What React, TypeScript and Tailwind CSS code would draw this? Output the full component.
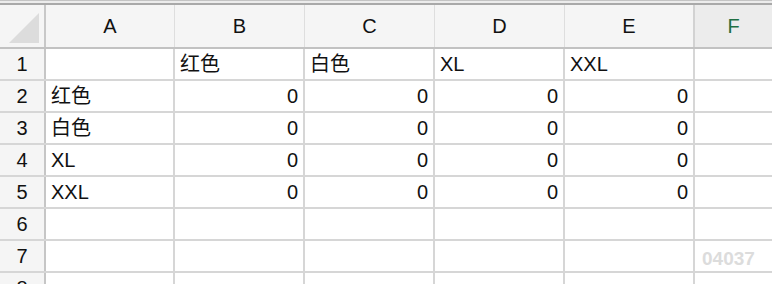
const cols = ['A', 'B', 'C', 'D', 'E', 'F']
const colW = ['w-[129px]', 'w-[130px]', 'w-[130px]', 'w-[130px]', 'w-[130px]', 'w-[77px]']

type Cell = { text: string; num?: boolean }

const rows: Cell[][] = [
  [{ text: '' }, { text: '红色' }, { text: '白色' }, { text: 'XL' }, { text: 'XXL' }, { text: '' }],
  [{ text: '红色' }, { text: '0', num: true }, { text: '0', num: true }, { text: '0', num: true }, { text: '0', num: true }, { text: '' }],
  [{ text: '白色' }, { text: '0', num: true }, { text: '0', num: true }, { text: '0', num: true }, { text: '0', num: true }, { text: '' }],
  [{ text: 'XL' }, { text: '0', num: true }, { text: '0', num: true }, { text: '0', num: true }, { text: '0', num: true }, { text: '' }],
  [{ text: 'XXL' }, { text: '0', num: true }, { text: '0', num: true }, { text: '0', num: true }, { text: '0', num: true }, { text: '' }],
  Array(6).fill({ text: '' }),
  Array(6).fill({ text: '' }),
  Array(6).fill({ text: '' }),
]

const font = { fontFamily: '"Liberation Sans", "Noto Sans CJK SC", sans-serif' }

export default function App() {
  return (
    <div className="relative w-[772px] h-[284px] overflow-hidden bg-white text-[20px] text-[#111]" style={font}>
      {/* top strip */}
      <div className="h-[1px] bg-[#c4c4c4]" />
      <div className="h-[2px] bg-[#ececec]" />
      <div className="h-[2px] bg-[#a9a9a9]" />

      {/* column headers */}
      <div className="flex h-[44px] border-b-2 border-[#c2c2c2] bg-[#f5f5f5]">
        <div className="w-[46px] shrink-0 border-r-2 border-[#c8c8c8] flex items-end justify-end pr-[5px] pb-[4px]">
          <svg width="30" height="30" viewBox="0 0 30 30">
            <polygon points="0,30 30,0 30,30" fill="#dcdcdc" />
          </svg>
        </div>
        {cols.map((c, i) => (
          <div
            key={c}
            className={`${colW[i]} shrink-0 flex items-center justify-center ${
              i === 5 ? 'bg-[#ececec] text-[#1f6f43]' : ''
            } ${i === 4 ? 'border-r-2 border-[#d2d2d2]' : i < 5 ? 'border-r border-[#dedede]' : ''}`}
          >
            {c}
          </div>
        ))}
      </div>

      {/* rows */}
      {rows.map((row, r) => (
        <div key={r} className="flex h-[32px] border-b-2 border-[#d6d6d6]">
          <div className="w-[46px] shrink-0 border-r-2 border-[#c6c6c6] bg-[#f5f5f5] flex items-center justify-center">
            {r + 1}
          </div>
          {row.map((cell, i) => (
            <div
              key={i}
              className={`${colW[i]} shrink-0 flex items-center px-[5px] ${
                cell.num ? 'justify-end' : 'justify-start'
              } ${i < 5 ? 'border-r-2 border-[#d6d6d6]' : ''}`}
            >
              {cell.text}
            </div>
          ))}
        </div>
      ))}

      {/* watermark */}
      <div className="absolute left-[702px] top-[245px] text-[19px] font-bold text-[#dcdcdc]" style={{ fontFamily: '"Liberation Sans", sans-serif' }}>
        04037
      </div>
    </div>
  )
}
